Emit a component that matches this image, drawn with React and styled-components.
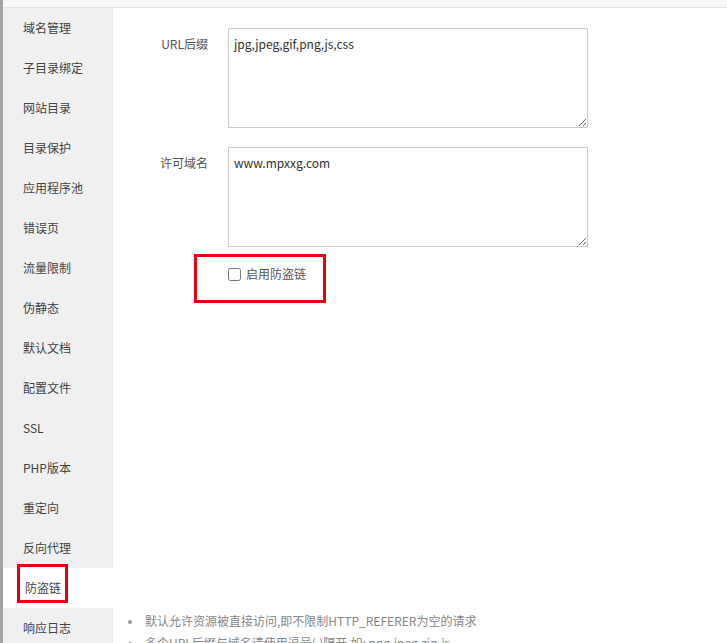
import styled, { createGlobalStyle } from "styled-components"

const GlobalStyle = createGlobalStyle`
    html, body {
        margin: 0;
        padding: 0;
        height: 100%;
        overflow: hidden;
    }
    body {
        font-family: "Noto Sans CJK SC", "Noto Sans", sans-serif;
        font-size: 12px;
        color: #555;
        background: #fff;
    }
`

const menu = [
    "域名管理", "子目录绑定", "网站目录", "目录保护", "应用程序池", "错误页",
    "流量限制", "伪静态", "默认文档", "配置文件", "SSL", "PHP版本",
    "重定向", "反向代理", "防盗链", "响应日志",
]

const Page = styled.div`
    display: flex;
    height: 643px;
    overflow: hidden;
`

const Backdrop = styled.div`
    width: 3px;
    flex-shrink: 0;
    background: #a3a3a3;
`

const Modal = styled.div`
    flex: 1;
    display: flex;
    flex-direction: column;
    background: #fff;
`

const TitleBar = styled.div`
    height: 7px;
    flex-shrink: 0;
    background: #f8f8f8;
    border-bottom: 1px solid #e6e6e6;
`

const Body = styled.div`
    flex: 1;
    display: flex;
`

const Sidebar = styled.ul`
    width: 110px;
    flex-shrink: 0;
    margin: 0;
    padding: 0;
    list-style: none;
    background: #f0f0f0;
`

const MenuItem = styled.li`
    display: flow-root;
    height: 40px;
    line-height: 40px;
    padding-left: 20px;
    color: #444;
    background: ${p => (p.$active ? "#fff" : "transparent")};
`

const Marked = styled.div`
    box-sizing: border-box;
    width: fit-content;
    height: 39px;
    margin: -4px 0 0 -6px;
    padding: 8px 4px 0 5px;
    line-height: 25px;
    border: 3px solid #e60012;
`

const Content = styled.div`
    flex: 1;
    padding: 20px 0 0 15px;
`

const FormRow = styled.div`
    display: flex;
    margin-bottom: 19px;
`

const Label = styled.label`
    width: 80px;
    margin-right: 20px;
    text-align: right;
    line-height: 32px;
    color: #555;
`

const Area = styled.textarea`
    box-sizing: border-box;
    width: 360px;
    height: 100px;
    border: 1px solid #ccc;
    padding: 6px 5px;
    font-family: "Noto Sans CJK SC", "Noto Sans", sans-serif;
    font-size: 12px;
    color: #333;
    outline: none;
`

const Highlight = styled.div`
    display: inline-flex;
    align-items: center;
    margin: -12px 0 0 66px;
    padding: 8px 17px 17px 31px;
    border: 3px solid #e60012;
`

const Check = styled.input`
    width: 13px;
    height: 13px;
    margin: 0 5px 0 0;
`

const CheckText = styled.span`
    color: #555;
    line-height: 18px;
`

const Tips = styled.ul`
    margin: 307px 0 0 0;
    padding: 0 0 0 15px;
    color: #888;
    line-height: 22px;

    li {
        list-style: disc;
        padding-left: 2px;
    }
    li::marker {
        color: #999;
        font-size: 10px;
    }
`

export default function App() {
    return (
        <>
            <GlobalStyle />
            <Page>
                <Backdrop />
                <Modal>
                    <TitleBar />
                    <Body>
                        <Sidebar>
                            {menu.map(item => (
                                <MenuItem key={item} $active={item === "防盗链"}>
                                    {item === "防盗链" ? <Marked>{item}</Marked> : item}
                                </MenuItem>
                            ))}
                        </Sidebar>
                        <Content>
                            <FormRow>
                                <Label>URL后缀</Label>
                                <Area defaultValue="jpg,jpeg,gif,png,js,css" />
                            </FormRow>
                            <FormRow>
                                <Label>许可域名</Label>
                                <Area defaultValue="www.mpxxg.com" />
                            </FormRow>
                            <Highlight>
                                <Check type="checkbox" id="enable" />
                                <CheckText>启用防盗链</CheckText>
                            </Highlight>
                            <Tips>
                                <li>默认允许资源被直接访问,即不限制HTTP_REFERER为空的请求</li>
                                <li>多个URL后缀与域名请使用逗号(,)隔开,如: png,jpeg,zip,js</li>
                            </Tips>
                        </Content>
                    </Body>
                </Modal>
            </Page>
        </>
    )
}
